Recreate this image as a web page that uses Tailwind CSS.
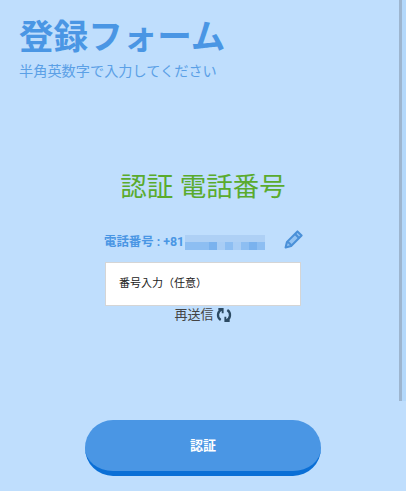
<!DOCTYPE html>
<html lang="ja">
<head>
    <meta charset="UTF-8">
    <title>登録フォーム</title>
    <script src="https://cdn.jsdelivr.net/npm/@tailwindcss/browser@4"></script>
</head>
<body class="bg-[#bfdefd] overflow-hidden font-['Roboto','Noto_Sans_CJK_JP',sans-serif]">
<div class="relative h-[491px] w-[406px] flex flex-col">
    <!-- ヘッダー -->
    <div class="pl-[19px] pt-[16px]">
        <h1 class="text-[34.6px] leading-[42px] font-bold text-[#4a96e4]">登録フォーム</h1>
        <p class="text-[14.2px] leading-[20px] mt-[3px] text-[#5ba0e6]">半角英数字で入力してください</p>
    </div>

    <h2 class="mt-[90px] text-center text-[26.500px] leading-[32px] text-[#5aab2d]">認証 電話番号</h2>

    <div class="w-[196px] ml-[105px] mt-[27px]">
        <div class="flex items-center h-[24px]">
            <span class="text-[12.400px] font-bold text-[#4a96e4] whitespace-nowrap -ml-[1px]">電話番号 : +81</span>
            <!-- 番号はモザイク -->
            <div class="w-[80px] h-[15px] ml-[1px] flex flex-col">
                <div class="h-[7px] bg-[#aed0f5]"></div>
                <div class="h-[8px] flex">
                    <div class="w-[24px] bg-[#8dbef2]"></div>
                    <div class="w-[8px] bg-[#7ab2ee]"></div>
                    <div class="w-[8px] bg-[#a8cdf5]"></div>
                    <div class="w-[8px] bg-[#8dbef2]"></div>
                    <div class="w-[8px] bg-[#a8cdf5]"></div>
                    <div class="w-[8px] bg-[#8dbef2]"></div>
                    <div class="w-[8px] bg-[#7ab2ee]"></div>
                    <div class="w-[8px] bg-[#8dbef2]"></div>
                </div>
            </div>
            <svg class="ml-auto -mr-[2px] -mt-[6px]" width="19" height="19" viewBox="0 0 24 24" fill="#93c3f3" stroke="#4a90d8" stroke-width="2.600" stroke-linejoin="round">
                <path d="M2 22l1.800-7L17 1.800l5.200 5.200L9 20.200z"/>
                <path d="M14 5l5 5" fill="none"/>
                <path d="M5 15l4 4" fill="none"/>
            </svg>
        </div>
        <div class="mt-[8px] h-[44px] bg-white border border-[#d5d5d5] flex items-center pl-[13px] text-[11px] text-[#222]">番号入力（任意）</div>
        <div class="flex items-center justify-center gap-[2px] text-[13px] leading-[18px] text-[#444]">
            <span>再送信</span>
            <svg width="16" height="16" viewBox="0 0 24 24" fill="none" stroke="#2c4a63" stroke-width="3.400">
                <path d="M9 3.500a9 9 0 0 0-2 16"/>
                <path d="M15 20.500a9 9 0 0 0 2-16"/>
                <path d="M3.500 3h6.500v6.500" stroke-width="2.800"/>
                <path d="M20.500 21h-6.500v-6.500" stroke-width="2.800"/>
            </svg>
        </div>
    </div>

    <!-- ボタン -->
    <button class="absolute left-[85px] top-[420px] w-[236px] h-[56px] pt-[1px] rounded-[28px] bg-[#4a96e4] border-b-[5px] border-[#0a6fd6] text-white text-[13px] font-bold">認証</button>

    <!-- スクロールバー -->
    <div class="absolute left-[399px] top-0 w-[3px] h-[401px] bg-[#9db5cf]"></div>
    <div class="absolute left-[402px] top-0 w-[4px] h-[401px] bg-[#b3d8fb]"></div>
</div>
</body>
</html>
